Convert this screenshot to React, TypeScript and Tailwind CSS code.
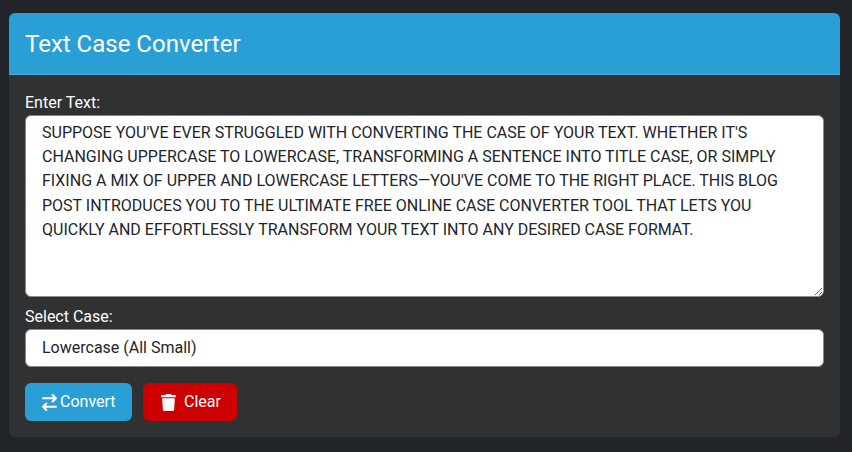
import { useState } from 'react';
import { FaArrowRightArrowLeft, FaTrash } from 'react-icons/fa6';

const SAMPLE =
  "SUPPOSE YOU'VE EVER STRUGGLED WITH CONVERTING THE CASE OF YOUR TEXT. WHETHER IT'S CHANGING UPPERCASE TO LOWERCASE, TRANSFORMING A SENTENCE INTO TITLE CASE, OR SIMPLY FIXING A MIX OF UPPER AND LOWERCASE LETTERS—YOU'VE COME TO THE RIGHT PLACE. THIS BLOG POST INTRODUCES YOU TO THE ULTIMATE FREE ONLINE CASE CONVERTER TOOL THAT LETS YOU QUICKLY AND EFFORTLESSLY TRANSFORM YOUR TEXT INTO ANY DESIRED CASE FORMAT.";

export default function App() {
  const [text, setText] = useState(SAMPLE);
  const [mode, setMode] = useState('lower');

  return (
    <div className="min-h-[452px] bg-[#212529] pl-[9px] pr-3 pt-[13px] pb-[15px] font-['Roboto',sans-serif]">
      <div className="rounded-md bg-[#303133] overflow-hidden">
        {/* Header */}
        <div className="h-[62px] flex items-center px-4 bg-[#2a9fd6] border-b border-[#4cb0e0]">
          <h1 className="text-2xl font-normal text-white">Text Case Converter</h1>
        </div>

        {/* Body */}
        <div className="px-4 pt-4 pb-4">
          <label className="block text-base leading-6 text-white">Enter Text:</label>
          <textarea
            value={text}
            onChange={(e) => setText(e.target.value)}
            className="block w-full h-[182px] rounded-md border border-[#8a8a8a] bg-white px-4 pt-[5px] pb-1 text-base leading-[24.2px] text-[#212529] outline-none"
          />

          <label className="block text-base leading-6 text-white mt-2">Select Case:</label>
          <select
            value={mode}
            onChange={(e) => setMode(e.target.value)}
            className="block w-full h-[38px] appearance-none rounded-md border border-[#8a8a8a] bg-white px-4 text-base text-[#212529] outline-none"
          >
            <option value="lower">Lowercase (All Small)</option>
            <option value="upper">Uppercase (All Capitals)</option>
            <option value="title">Title Case</option>
            <option value="sentence">Sentence Case</option>
          </select>

          <div className="flex gap-[11px] mt-4">
            <button className="h-[38px] w-[107px] flex items-center pl-4 gap-[2px] rounded-md bg-[#2a9fd6] text-base text-white">
              <FaArrowRightArrowLeft size={17} />
              Convert
            </button>
            <button className="h-[38px] w-[94px] flex items-center pl-[17px] gap-[7px] rounded-md bg-[#cc0000] text-base text-white">
              <FaTrash size={17} />
              Clear
            </button>
          </div>
        </div>
      </div>
    </div>
  );
}
